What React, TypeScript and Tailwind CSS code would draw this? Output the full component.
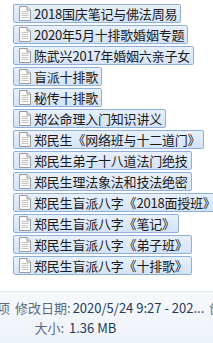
const files = [
  '2018国庆笔记与佛法周易',
  '2020年5月十排歌婚姻专题',
  '陈武兴2017年婚姻六亲子女',
  '盲派十排歌',
  '秘传十排歌',
  '郑公命理入门知识讲义',
  '郑民生《网络班与十二道门》',
  '郑民生弟子十八道法门绝技',
  '郑民生理法象法和技法绝密',
  '郑民生盲派八字《2018面授班》',
  '郑民生盲派八字《笔记》',
  '郑民生盲派八字《弟子班》',
  '郑民生盲派八字《十排歌》',
];

function DocIcon() {
  return (
    <svg width="12" height="15" viewBox="0 0 12 15" className="shrink-0">
      <path d="M0.5 0.5 H8 L11.5 4 V14.5 H0.5 Z" fill="#fbfbfb" stroke="#9a9a9a" />
      <path d="M8 0.5 V4 H11.5" fill="#e6e6e6" stroke="#9a9a9a" />
      <path d="M2.5 5.5 H9.5 M2.5 7.5 H9.5 M2.5 9.5 H9.5 M2.5 11.5 H9.5" stroke="#c4c4c4" />
    </svg>
  );
}

export default function App() {
  return (
    <div
      className="w-[213px] h-[343px] overflow-hidden bg-white flex flex-col"
      style={{ fontFamily: '"Noto Sans CJK SC", "Noto Sans", sans-serif' }}
    >
      <div className="flex flex-col items-start gap-[2px] pt-[4px] pl-[13px] h-[291px]">
        {files.map((name) => (
          <div
            key={name}
            className="h-[19px] flex items-center gap-[3px] pl-[5px] pr-[3px] rounded-[2px] border border-[#8fb0d8] bg-gradient-to-b from-[#e8f1fc] to-[#d3e3f7] whitespace-nowrap"
          >
            <DocIcon />
            <span className="text-[13px] leading-none text-[#1a1a1a] tracking-[-0.2px]">{name}</span>
          </div>
        ))}
      </div>
      <div className="flex-1 border-t border-[#e3e9f1] bg-gradient-to-b from-[#f6f9fc] to-[#eef3f9] pt-[6px] text-[13px] leading-[20px] whitespace-nowrap">
        <div className="flex ml-[-3px]">
          <span className="text-[#5a6a80]">项</span>
          <span className="ml-[5px] text-[#5a6a80] w-[57px]">修改日期:</span>
          <span className="ml-[2px] text-[#1e395b]">2020/5/24 9:27 - 202...</span>
          <span className="ml-[5px] text-[#5a6a80]">创</span>
        </div>
        <div className="flex">
          <span className="w-[67px] text-right text-[#5a6a80] pr-[3px]">大小:</span>
          <span className="ml-[2px] text-[#1e395b]">1.36 MB</span>
        </div>
      </div>
    </div>
  );
}
